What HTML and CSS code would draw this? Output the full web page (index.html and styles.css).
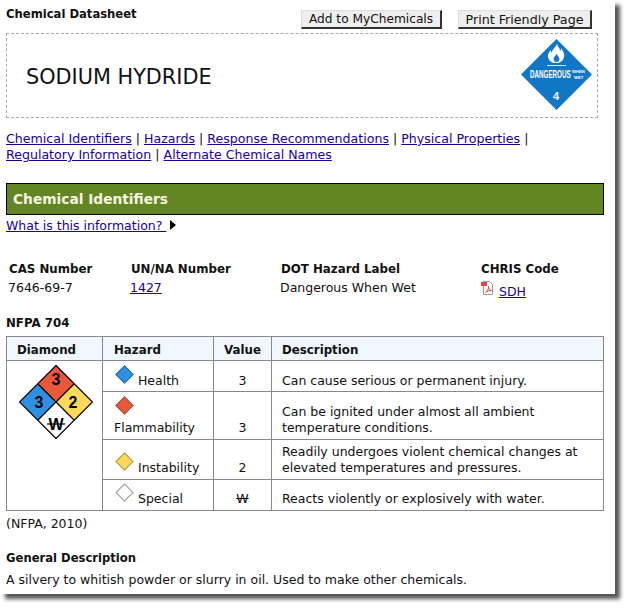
FILE: index.html
```html
<!DOCTYPE html>
<html lang="en">
<head>
  <meta charset="UTF-8">
  <title>Chemical Datasheet</title>
  <link rel="stylesheet" href="styles.css">
</head>
<body>
  <div class="page">
    <div class="top">
      <div class="top-title">Chemical Datasheet</div>
      <div class="top-buttons">
        <button class="btn btn-add">Add to MyChemicals</button>
        <button class="btn btn-print">Print Friendly Page</button>
      </div>
    </div>

    <div class="name-box">
      <div class="name">SODIUM HYDRIDE</div>
      <svg class="placard" width="71" height="71" viewBox="0 0 71 71">
        <polygon points="35.500,0 71,35.500 35.500,71 0,35.500" fill="#1176c4"/>
        <path fill-rule="evenodd" d="M36 5c1 3 3 4 3 7 1-1 1-2 1-3 2 3 4 6 3 9-1 4-4 6-8 6s-7-2-8-6c-.500-3 1-5 3-7 0 1 0 2 1 3 0-4 4-6 5-9zM35.500 15c-1 2-3 3-3 5 0 2 1.500 3 3 3s3-1 3-3c0-2-2-3-3-5z" fill="#fff"/>
        <path d="M26 26.500h19" stroke="#dbe9f5" stroke-width="1"/>
        <text class="pl-big" transform="translate(9 39) scale(.57 1)">DANGEROUS</text>
        <text class="pl-small" x="51" y="34">WHEN</text>
        <text class="pl-small" x="53" y="39.500">WET</text>
        <text class="pl-num" x="35" y="60.500" text-anchor="middle">4</text>
      </svg>
    </div>

    <div class="nav-links">
      <a href="#">Chemical Identifiers</a> | <a href="#">Hazards</a> | <a href="#">Response Recommendations</a> | <a href="#">Physical Properties</a> |<br>
      <a href="#">Regulatory Information</a> | <a href="#">Alternate Chemical Names</a>
    </div>

    <h2 class="section-bar">Chemical Identifiers</h2>
    <div class="what-is">
      <a href="#">What is this information? </a>
      <span class="arrow"></span>
    </div>

    <div class="ids">
      <div class="id-col id-cas">
        <div class="id-label">CAS Number</div>
        <div class="id-value">7646-69-7</div>
      </div>
      <div class="id-col id-un">
        <div class="id-label">UN/NA Number</div>
        <div class="id-value"><a href="#">1427</a></div>
      </div>
      <div class="id-col id-dot">
        <div class="id-label">DOT Hazard Label</div>
        <div class="id-value">Dangerous When Wet</div>
      </div>
      <div class="id-col id-chris">
        <div class="id-label">CHRIS Code</div>
        <div class="id-value chris-value">
          <svg class="pdf-icon" width="13" height="15" viewBox="0 0 13 15">
            <path d="M2.500.500h6l3 3v10h-9z" fill="#fff" stroke="#999"/>
            <rect x="0" y="1" width="6" height="4" fill="#e04a4a"/>
            <path d="M4.500 11.500c2-1 3-3 3-6 0 2 1 3 3 4-2 0-4 .500-6 2z" fill="none" stroke="#d22" stroke-width=".8"/>
          </svg>
          <a href="#">SDH</a>
        </div>
      </div>
    </div>

    <div class="nfpa-title">NFPA 704</div>
    <table class="nfpa">
      <thead>
        <tr>
          <th class="col-diamond">Diamond</th>
          <th class="col-hazard">Hazard</th>
          <th class="col-value">Value</th>
          <th class="col-desc">Description</th>
        </tr>
      </thead>
      <tbody>
        <tr class="row-1">
          <td class="cell-diamond" rowspan="4">
            <svg width="74" height="74" viewBox="0 0 74 74">
              <polygon points="37,.500 73.500,37 37,73.500 .500,37" fill="#fff"/>
              <polygon points="37,.500 55.250,18.750 37,37 18.750,18.750" fill="#e9573a"/>
              <polygon points="18.750,18.750 37,37 18.750,55.250 .500,37" fill="#2e90e0"/>
              <polygon points="55.250,18.750 73.500,37 55.250,55.250 37,37" fill="#fcd95b"/>
              <polygon points="37,.500 73.500,37 37,73.500 .500,37" fill="none" stroke="#000" stroke-width="1.200"/>
              <path d="M18.750 18.750l36.500 36.500M55.250 18.750l-36.500 36.500" stroke="#000" stroke-width="1.200"/>
              <text class="d-num" x="37" y="20" text-anchor="middle">3</text>
              <text class="d-num" x="20" y="42.500" text-anchor="middle">3</text>
              <text class="d-num" x="54" y="43" text-anchor="middle">2</text>
              <text class="d-num" x="37" y="65" text-anchor="middle">W</text>
              <path d="M28 59h18" stroke="#000" stroke-width="1.200"/>
            </svg>
          </td>
          <td class="cell-hazard">
            <span class="mini mini-blue"></span> Health
          </td>
          <td class="cell-value">3</td>
          <td>Can cause serious or permanent injury.</td>
        </tr>
        <tr class="row-2">
          <td class="cell-hazard">
            <span class="mini mini-red"></span><br>Flammability
          </td>
          <td class="cell-value">3</td>
          <td>Can be ignited under almost all ambient temperature conditions.</td>
        </tr>
        <tr class="row-3">
          <td class="cell-hazard">
            <span class="mini mini-yellow"></span> Instability
          </td>
          <td class="cell-value">2</td>
          <td>Readily undergoes violent chemical changes at elevated temperatures and pressures.</td>
        </tr>
        <tr class="row-4">
          <td class="cell-hazard">
            <span class="mini mini-white"></span> Special
          </td>
          <td class="cell-value"><span class="strike-w">W</span></td>
          <td>Reacts violently or explosively with water.</td>
        </tr>
      </tbody>
    </table>
    <div class="source">(NFPA, 2010)</div>

    <div class="desc-title">General Description</div>
    <div class="desc-text">A silvery to whitish powder or slurry in oil. Used to make other chemicals.</div>
  </div>
</body>
</html>
```

FILE: styles.css
```css
html, body {
  margin: 0;
  padding: 0;
  background: #fff;
}

body {
  height: 609px;
  font-family: "DejaVu Sans", Verdana, sans-serif;
  font-size: 12.500px;
  color: #111;
  overflow: hidden;
}

a {
  color: #1a0099;
}

.page {
  width: 609px;
  height: 594px;
  padding-left: 6px;
  background: #fff;
  box-shadow: 5px 5px 4px #555;
  overflow: hidden;
}

.top {
  display: flex;
  justify-content: space-between;
  height: 33px;
  width: 586px;
}

.top-title {
  font-size: 11.600px;
  font-weight: bold;
  padding-top: 7px;
}

.top-buttons {
  display: flex;
  gap: 16px;
  padding-top: 10px;
}

.btn {
  height: 19px;
  padding: 0;
  font-family: inherit;
  font-size: 12.700px;
  color: #111;
  background: #eee;
  border: 1px solid #ddd;
  border-right: 2px solid #333;
  border-bottom: 2px solid #333;
}

.btn-add {
  width: 141px;
  font-size: 12.200px;
}

.btn-print {
  width: 134px;
}

.name-box {
  display: flex;
  justify-content: space-between;
  align-items: center;
  width: 590px;
  height: 83px;
  border: 1px dashed #aaa;
}

.name {
  padding: 3px 0 0 19px;
  font-size: 20.800px;
}

.placard {
  margin: 0 5px 2px 0;
}

.pl-big {
  font-family: "Liberation Sans", sans-serif;
  font-size: 11px;
  font-weight: bold;
  fill: #fff;
}

.pl-small {
  font-family: "Liberation Sans", sans-serif;
  font-size: 4.200px;
  font-weight: bold;
  fill: #fff;
}

.pl-num {
  font-family: "Liberation Sans", sans-serif;
  font-size: 11px;
  font-weight: bold;
  fill: #fff;
}

.nav-links {
  margin-top: 13px;
  line-height: 16px;
  font-size: 12.600px;
}

.section-bar {
  width: 590px;
  height: 30px;
  margin: 20px 0 0;
  padding-left: 6px;
  line-height: 30px;
  font-size: 13.750px;
  font-weight: bold;
  color: #f5f5e0;
  background: #648524;
  border: 1px solid #000;
}

.what-is {
  display: flex;
  align-items: center;
  height: 20px;
}

.what-is a {
  white-space: pre;
}

.arrow {
  width: 0;
  height: 0;
  margin-left: 4px;
  border-left: 6px solid #000;
  border-top: 5px solid transparent;
  border-bottom: 5px solid transparent;
}

.ids {
  display: flex;
  margin-top: 25px;
  height: 55px;
}

.id-col {
  line-height: 19px;
}

.id-cas {
  width: 124px;
  padding-left: 2px;
  box-sizing: border-box;
}

.id-un {
  width: 150px;
}

.id-dot {
  width: 200px;
}

.id-label {
  font-size: 11.800px;
  font-weight: bold;
  padding-left: 1px;
}

.id-value {
  margin-top: -1px;
}

.chris-value {
  margin-top: 3px;
}

.pdf-icon {
  vertical-align: top;
  margin: -1px 1px 0 1px;
}

.nfpa-title {
  font-size: 11.800px;
  font-weight: bold;
  height: 16px;
  line-height: 16px;
}

.nfpa {
  width: 598px;
  margin-top: 5px;
  border-collapse: collapse;
  table-layout: fixed;
}

.nfpa th, .nfpa td {
  box-sizing: border-box;
  border: 1px solid #888;
  padding: 0 0 3px 10px;
  line-height: 16px;
  text-align: left;
  vertical-align: bottom;
}

.nfpa th {
  height: 24px;
  padding: 2px 0 0 10px;
  vertical-align: middle;
  font-size: 11.800px;
  background: #f0f7ff;
  font-weight: bold;
}

.nfpa th.col-hazard {
  padding-left: 11px;
}

.col-diamond {
  width: 96px;
}

.col-hazard {
  width: 111px;
}

.col-value {
  width: 58px;
}

.nfpa td.cell-value {
  padding-left: 0;
  text-align: center;
}

.nfpa td.cell-diamond {
  padding: 4px 0 0 12px;
  vertical-align: top;
}

.nfpa td.cell-hazard {
  padding-left: 11px;
}

.row-1 td {
  height: 31px;
}

.nfpa .row-1 td {
  padding-bottom: 2px;
}

.row-2 td {
  height: 48px;
}

.row-3 td {
  height: 40px;
}

.row-4 td {
  height: 31px;
}

.mini {
  display: inline-block;
  width: 13px;
  height: 13px;
  margin: 2px 3px 4px 4px;
  transform: rotate(45deg);
  border: 1px solid #888;
  box-sizing: border-box;
}

.mini-blue {
  background: #2e90e0;
  border-color: #2a6ea8;
}

.mini-red {
  background: #e9573a;
  border-color: #a8563f;
}

.mini-yellow {
  background: #fcd95b;
  border-color: #a89a50;
}

.mini-white {
  background: #fff;
  border-color: #999;
}

.strike-w {
  text-decoration: line-through;
}

.source {
  margin-top: 5px;
  height: 33px;
}

.desc-title {
  font-size: 11.600px;
  font-weight: bold;
  line-height: 18px;
}

.desc-text {
  margin-top: 5px;
  line-height: 16px;
}

.d-num {
  font-family: "Liberation Sans", sans-serif;
  font-size: 16px;
  font-weight: bold;
  fill: #000;
}
```
